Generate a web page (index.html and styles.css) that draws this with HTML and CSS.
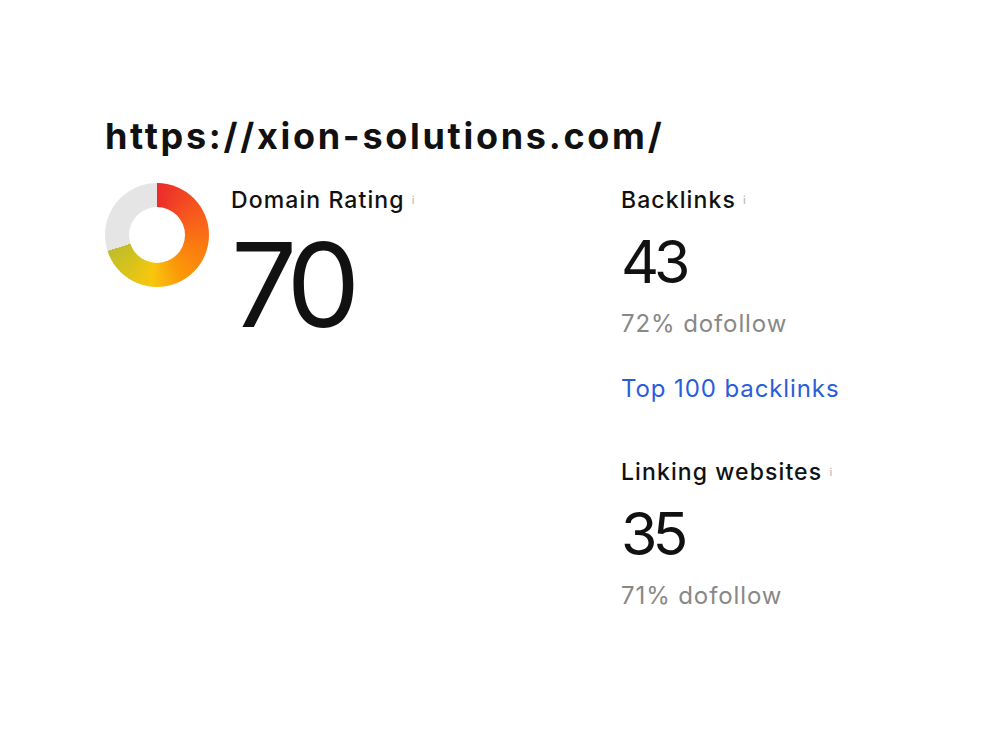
FILE: index.html
```html
<!DOCTYPE html>
<html lang="en">
<head>
    <meta charset="UTF-8">
    <title>Website Authority Checker</title>
    <link rel="stylesheet" href="styles.css">
</head>
<body>
    <div class="report">
        <h1 class="site-url">https://xion-solutions.com/</h1>
        <div class="metrics">
            <div class="rating">
                <div class="donut"></div>
                <div class="rating-body">
                    <div class="label">Domain Rating <span class="info">i</span></div>
                    <div class="rating-value">70</div>
                </div>
            </div>
            <div class="stats">
                <div class="stat">
                    <div class="label">Backlinks <span class="info">i</span></div>
                    <div class="stat-value">43</div>
                    <div class="stat-note">72% dofollow</div>
                    <a class="stat-link" href="#">Top 100 backlinks</a>
                </div>
                <div class="stat">
                    <div class="label">Linking websites <span class="info">i</span></div>
                    <div class="stat-value">35</div>
                    <div class="stat-note">71% dofollow</div>
                </div>
            </div>
        </div>
    </div>
</body>
</html>
```

FILE: styles.css
```css
body {
    margin: 0;
    background: #fff;
    font-family: Inter, "Liberation Sans", sans-serif;
    color: #111;
}

.report {
    padding: 112px 0 0 105px;
}

.site-url {
    margin: 0;
    font-size: 36px;
    font-weight: 700;
    line-height: 48px;
    letter-spacing: 2.7px;
}

.metrics {
    display: grid;
    grid-template-columns: 516px auto;
    margin-top: 23px;
}

.rating {
    display: flex;
    gap: 22px;
}

/* 70 of 100 filled, red at the top fading to yellow */
.donut {
    position: relative;
    flex: none;
    width: 104px;
    height: 104px;
    border-radius: 50%;
    background: conic-gradient(#ec2a2c 0%, #f5521f 14%, #fb7c0f 30%, #fb9a08 42%, #f8c70d 52%, #d6c21c 62%, #c2bd2c 70%, #e5e5e5 70%, #e5e5e5 100%);
}
.donut::after {
    content: "";
    position: absolute;
    top: 24px;
    left: 24px;
    width: 56px;
    height: 56px;
    border-radius: 50%;
    background: #fff;
}

.label {
    margin-top: 4px;
    font-size: 23px;
    font-weight: 500;
    line-height: 26px;
    letter-spacing: 1.1px;
    color: #111;
}
.info {
    font-size: 11px;
    color: #bbb;
    vertical-align: top;
}

.rating-value {
    margin-top: 13px;
    font-size: 117px;
    font-weight: 400;
    line-height: 117px;
    letter-spacing: -9px;
}

.stats {
    display: flex;
    flex-direction: column;
    gap: 51px;
}

.stat-value {
    margin-top: 14px;
    font-size: 59px;
    line-height: 70px;
    letter-spacing: -5px;
}
.stat-note {
    margin-top: 12px;
    font-size: 24px;
    line-height: 30px;
    letter-spacing: 0.9px;
    color: #888;
}
.stat-link {
    display: block;
    margin-top: 35px;
    font-size: 24px;
    line-height: 30px;
    letter-spacing: 0.9px;
    color: #2a5ddb;
    text-decoration: none;
}
```
